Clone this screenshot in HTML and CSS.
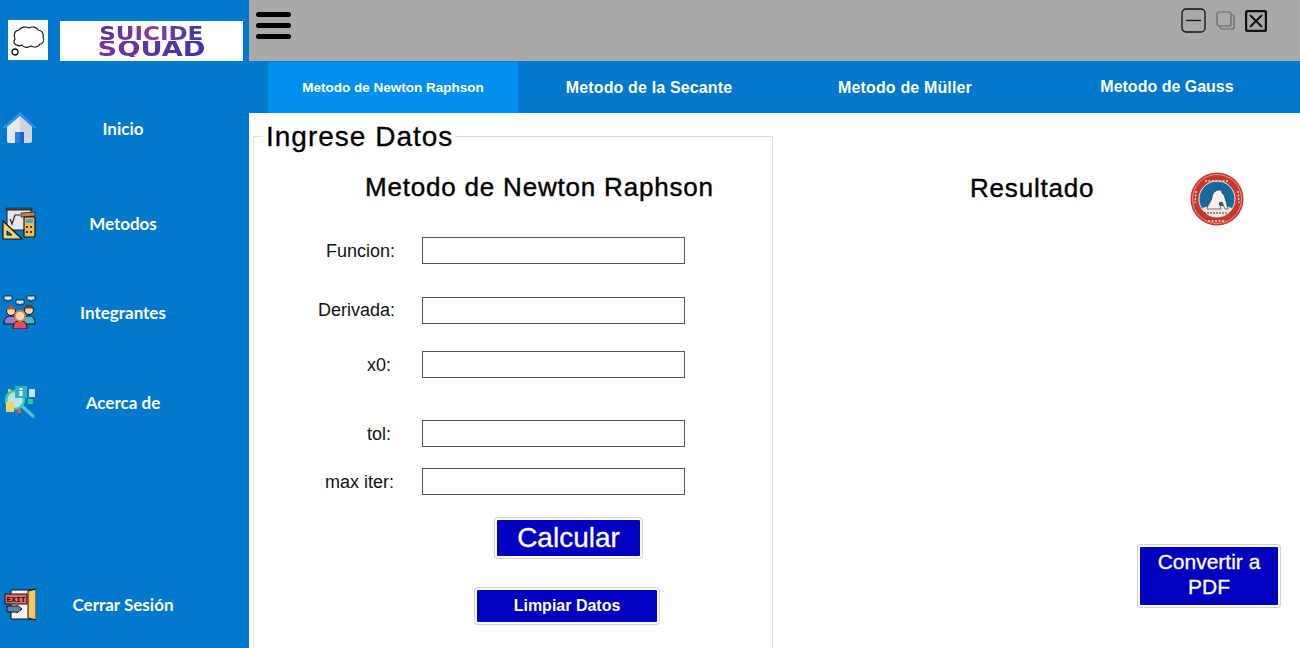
FILE: index.html
```html
<!DOCTYPE html>
<html lang="en">
<head>
    <meta charset="UTF-8">
    <title>Metodo de Newton Raphson</title>
    <link rel="stylesheet" href="styles.css">
</head>
<body>
    <div class="app">
        <!-- Sidebar -->
        <aside class="sidebar">
            <div class="brand">
                <div class="brand-icon">
                    <svg width="40" height="40" viewBox="0 0 40 40">
                        <path d="M9 25c-3 0-4-4-2-6-2-4 0-9 4-9 2-3 7-4 10-2 3-2 8-1 9 2 4 0 6 4 5 7 2 3 0 7-3 7-1 3-6 4-9 2-3 2-7 2-9-1-2 1-4 1-5 0z" fill="#fff" stroke="#111" stroke-width="1.100"/>
                        <circle cx="7" cy="32" r="3" fill="#fff" stroke="#111" stroke-width="1.300"/>
                    </svg>
                </div>
                <div class="brand-logo">
                    <span class="brand-top">SUICIDE</span>
                    <span class="brand-bottom">SQUAD</span>
                </div>
            </div>

            <a class="side-link link-home" href="#inicio">
                <svg class="side-icon" width="34" height="34" viewBox="0 0 34 34">
                    <path d="M24 3h5v10h-5z" fill="#1f6fd0"/>
                    <path d="M5 15 18 4v28H7a2 2 0 0 1-2-2z" fill="#e6e8eb"/>
                    <path d="M18 4 30 15v15a2 2 0 0 1-2 2H18z" fill="#d0d4da"/>
                    <path d="M13 21h5v11h-5z" fill="#2a7fe0"/>
                    <path d="M18 21h4v11h-4z" fill="#1c65c4"/>
                    <path d="M1 16 18 1l16 15-1.500 2L18 5 2.500 18z" fill="#2d8ff0"/>
                </svg>
                <span>Inicio</span>
            </a>

            <a class="side-link link-methods" href="#metodos">
                <svg class="side-icon" width="34" height="34" viewBox="0 0 34 34">
                    <path d="M4 2h26v2H4z" fill="#555" stroke="#111" stroke-width=".6"/>
                    <path d="M5 4h24v20H5z" fill="#e6e8ea" stroke="#222"/>
                    <path d="M8 13l2 5 3-9h5" fill="none" stroke="#222" stroke-width="1.200"/>
                    <path d="M19 7l14-1v4l-14 1z" fill="#c9785a" stroke="#222" stroke-width=".8"/>
                    <path d="M1 15v18h19z" fill="#f4d27a" stroke="#111" stroke-width="1.200"/>
                    <path d="M5 25v4h5z" fill="#0078cc" stroke="#111"/>
                    <rect x="22" y="11" width="11" height="20" rx="1" fill="#f2b84b" stroke="#111" stroke-width="1.200"/>
                    <rect x="24" y="13" width="7" height="4" fill="#4aa5d8"/>
                    <path d="M24 20h2v2h-2zM28 20h2v2h-2zM24 25h2v2h-2zM28 25h2v2h-2z" fill="#333"/>
                </svg>
                <span>Metodos</span>
            </a>

            <a class="side-link link-team" href="#integrantes">
                <svg class="side-icon" width="34" height="34" viewBox="0 0 34 34">
                    <path d="M2 1h8v4H7l-1 2-1-2H2zM14 5h8v4h-3l-1 2-1-2h-3zM25 1h8v4h-3l-1 2-1-2h-3z" fill="#cfe3ea" stroke="#111" stroke-width=".8"/>
                    <path d="M2 29c0-6 3-8 7-8s6 2 6 8z" fill="#9a79c9" stroke="#111"/>
                    <circle cx="9" cy="16" r="4.500" fill="#f6d3b8" stroke="#111"/>
                    <path d="M4.500 15c0-6 9-6 9 0-3-1-6-1-9 0z" fill="#a6543a"/>
                    <path d="M20 29c0-6 3-8 7-8s6 2 6 8z" fill="#4fb5c9" stroke="#111"/>
                    <circle cx="27" cy="15" r="4.500" fill="#f6d3b8" stroke="#111"/>
                    <path d="M22.500 14c0-6 9-6 9 0-3-1-6-1-9 0z" fill="#5a3a2a"/>
                    <path d="M11 34c0-6 2-8 7-8s7 2 7 8z" fill="#e5475c" stroke="#111"/>
                    <circle cx="18" cy="21" r="5" fill="#f9d9bf" stroke="#e28a28" stroke-width="1.800"/>
                </svg>
                <span>Integrantes</span>
            </a>

            <a class="side-link link-about" href="#acerca">
                <svg class="side-icon" width="34" height="34" viewBox="0 0 34 34">
                    <path d="M6 4h3v3H6z" fill="#f2b84b"/>
                    <circle cx="13" cy="15" r="9" fill="#bfe0ec" stroke="#2fd39b" stroke-width="2.500"/>
                    <path d="M21 22l10 9" stroke="#4fc3d8" stroke-width="3.500" stroke-linecap="round"/>
                    <path d="M13 1h12v12H13z" fill="#28b3c7"/>
                    <path d="M17.500 3h3v2h-3zM17.500 6h3v5h-3z" fill="#fff"/>
                    <path d="M27 4h6v8h-6z" fill="#cfe0f5"/>
                    <path d="M4 17h8v10H4z" fill="#f6cf6e"/>
                    <path d="M26 14h5v5h-5z" fill="#1fd08f"/>
                    <path d="M15 24h4v4h-4z" fill="#ee4e62"/>
                </svg>
                <span>Acerca de</span>
            </a>

            <a class="side-link link-exit" href="#salir">
                <svg class="side-icon" width="34" height="34" viewBox="0 0 34 34">
                    <path d="M9 3h24v29H9z" fill="#f4f4f4" stroke="#111"/>
                    <path d="M26 4l8-2v31l-8-2z" fill="#f7c766" stroke="#111"/>
                    <rect x="3" y="7" width="22" height="10" fill="#e8656a" stroke="#111"/>
                    <text x="14" y="15" class="exit-text">EXIT</text>
                    <path d="M5 19h10v-1l5 4-5 4v-1H5z" fill="#5b87a8" stroke="#111"/>
                </svg>
                <span>Cerrar Sesión</span>
            </a>
        </aside>

        <main class="main">
            <!-- Top bar -->
            <header class="topbar">
                <button class="burger"><i></i><i></i><i></i></button>
                <div class="win-buttons">
                    <svg width="26" height="26" viewBox="0 0 26 26">
                        <rect x="1" y="1" width="23" height="23" rx="4" fill="none" stroke="#111" stroke-width="1.300"/>
                        <path d="M5 12.500h15" stroke="#111" stroke-width="1.300"/>
                    </svg>
                    <svg width="20" height="20" viewBox="0 0 20 20">
                        <rect x="4" y="4" width="14" height="14" rx="2" fill="none" stroke="#666" stroke-width="1.200"/>
                        <rect x="1" y="1" width="14" height="14" rx="2" fill="#a9a9a9" stroke="#666" stroke-width="1.200"/>
                    </svg>
                    <svg width="22" height="22" viewBox="0 0 22 22">
                        <rect x="1" y="1" width="20" height="20" rx="2" fill="none" stroke="#111" stroke-width="2.400"/>
                        <path d="M5 5l12 12M17 5 5 17" stroke="#111" stroke-width="2"/>
                    </svg>
                </div>
            </header>

            <!-- Tabs -->
            <nav class="tabs">
                <a class="tab active" href="#newton">Metodo de Newton Raphson</a>
                <a class="tab" href="#secante">Metodo de la Secante</a>
                <a class="tab" href="#muller">Metodo de Müller</a>
                <a class="tab tab-last" href="#gauss">Metodo de Gauss</a>
            </nav>

            <div class="content">
                <fieldset class="datos">
                    <legend>Ingrese Datos</legend>
                    <h2>Metodo de Newton Raphson</h2>

                    <div class="field field-fn"><label>Funcion:</label><input type="text"></div>
                    <div class="field field-der"><label>Derivada:</label><input type="text"></div>
                    <div class="field field-x0"><label class="short">x0:</label><input type="text"></div>
                    <div class="field field-tol"><label class="short">tol:</label><input type="text"></div>
                    <div class="field field-max"><label class="mid">max iter:</label><input type="text"></div>

                    <div class="actions">
                        <button class="btn btn-calc">Calcular</button>
                        <button class="btn btn-clear">Limpiar Datos</button>
                    </div>
                </fieldset>

                <section class="resultado">
                    <div class="res-head">
                        <h2>Resultado</h2>
                        <svg class="seal" width="54" height="54" viewBox="0 0 54 54">
                            <circle cx="27" cy="27" r="26.500" fill="#c8372d"/>
                            <circle cx="27" cy="27" r="24.500" fill="none" stroke="#eed9c8" stroke-width=".6"/>
                            <circle cx="27" cy="27" r="18" fill="#17699f" stroke="#f3ece2"/>
                            <path d="M12 36c9-3 21-3 30 0-3 6-9 9-15 9s-12-3-15-9z" fill="#f1e8dc"/>
                            <path d="M17 37c1-5 4-7 5-11 0-4 3-8 7-8 2 0 3 1 3 3l2 2 2 6 2 8h-3l-3-7-3 1 2 6z" fill="#f5f1ea" stroke="#222" stroke-width=".6"/>
                            <path d="M14 41h24" stroke="#333" stroke-width="1" stroke-dasharray="2 1"/>
                            <path d="M15 9h24M6 19l-1 12M48 19l1 12M18 49h18" stroke="#f0d9c4" stroke-width="1.500" stroke-dasharray="2 1.500"/>
                        </svg>
                    </div>
                    <button class="btn btn-pdf">Convertir a PDF</button>
                </section>
            </div>
        </main>
    </div>
</body>
</html>
```

FILE: styles.css
```css
* {
    margin: 0;
    padding: 0;
    box-sizing: border-box;
}

html, body {
    height: 100%;
    overflow: hidden;
}

body {
    font-family: 'Liberation Sans', Arial, sans-serif;
    color: #000;
    background: #fff;
}

.app {
    display: flex;
    height: 648px;
    overflow: hidden;
}

/* sidebar */
.sidebar {
    width: 249px;
    flex: none;
    background: #0078cc;
    display: flex;
    flex-direction: column;
}

.brand {
    display: flex;
    align-items: flex-start;
    padding: 20px 6px 0 8px;
    height: 108px;
}

.brand-icon {
    width: 40px;
    height: 40px;
    background: #fff;
    flex: none;
}

.brand-logo {
    width: 183px;
    height: 40px;
    margin: 1px 0 0 12px;
    background: #fff;
    display: flex;
    flex-direction: column;
    align-items: center;
    justify-content: center;
    font-family: 'DejaVu Sans', sans-serif;
    font-weight: bold;
    line-height: 16px;
}

.brand-top {
    font-size: 20px;
    transform: scaleX(1.15);
    background: linear-gradient(90deg, #57308f, #8a3a9c, #3c3aa0);
    -webkit-background-clip: text;
    background-clip: text;
    color: transparent;
}

.brand-bottom {
    font-size: 21px;
    transform: scaleX(1.3);
    background: linear-gradient(90deg, #7a3399, #3a37a5);
    -webkit-background-clip: text;
    background-clip: text;
    color: transparent;
}

.side-link {
    display: flex;
    align-items: center;
    height: 40px;
    padding-left: 2px;
    color: #fff;
    text-decoration: none;
    font-family: 'Lato', sans-serif;
    font-weight: bold;
    font-size: 17px;
}

.side-link span {
    width: 174px;
    text-align: center;
}

.side-icon {
    flex: none;
}

.link-methods { margin-top: 55px; }
.link-team { margin-top: 49px; }
.link-about { margin-top: 50px; }
.link-exit { margin-top: 162px; }

.exit-text {
    font-family: 'Liberation Mono', monospace;
    font-size: 8px;
    font-weight: bold;
    text-anchor: middle;
    fill: #111;
}

/* right side */
.main {
    flex: 1;
    min-width: 0;
    display: flex;
    flex-direction: column;
}

.topbar {
    height: 62px;
    flex: none;
    background: #a9a9a9;
    border-bottom: 1px solid #0078cc;
    display: flex;
    justify-content: space-between;
    align-items: flex-start;
}

.burger {
    border: 0;
    background: none;
    width: 35px;
    margin: 12px 0 0 7px;
    display: flex;
    flex-direction: column;
    gap: 6px;
}

.burger i {
    display: block;
    height: 5px;
    border-radius: 3px;
    background: #000;
}

.win-buttons {
    display: flex;
    align-items: center;
    gap: 9px;
    margin: 8px 33px 0 0;
}

.tabs {
    height: 51px;
    flex: none;
    background: #0078cc;
    display: flex;
    padding-left: 19px;
    gap: 6px;
}

.tab {
    width: 250px;
    display: flex;
    align-items: center;
    justify-content: center;
    color: #fff;
    text-decoration: none;
    font-weight: bold;
    font-size: 16px;
    letter-spacing: 0.15px;
}

.tab.active {
    background: #008fef;
    font-size: 13.500px;
    letter-spacing: 0;
}

.tab-last {
    margin-left: 6px;
    padding-bottom: 2px;
    letter-spacing: 0;
}

.content {
    flex: 1;
    display: flex;
    min-height: 0;
}

/* form */
.datos {
    width: 520px;
    height: 560px;
    flex: none;
    margin: 5px 0 0 4px;
    border: 1px solid #ddd;
}

.datos legend {
    margin-left: 9px;
    padding: 2px 3px 0;
    font-size: 28px;
    line-height: 34px;
    letter-spacing: 1px;
    -webkit-text-stroke: 0.3px #000;
}

.datos h2 {
    margin: 18px 0 0 111px;
    font-size: 26px;
    line-height: 30px;
    letter-spacing: 0.8px;
    font-weight: normal;
    -webkit-text-stroke: 0.4px #000;
    white-space: nowrap;
}

.field {
    display: flex;
    align-items: center;
    height: 27px;
    font-size: 18px;
    color: #111;
}

.field label {
    width: 141px;
    margin-top: 2px;
    margin-right: 27px;
    text-align: right;
}

.field-der label {
    margin-top: 0;
}

.field label.short {
    width: 137px;
    margin-right: 31px;
}

.field label.mid {
    width: 140px;
    margin-right: 28px;
}

.field input {
    width: 263px;
    height: 27px;
    border: 1px solid #555;
    background: #fff;
}

.field-fn { margin-top: 35px; }
.field-der { margin-top: 33px; }
.field-x0 { margin-top: 27px; }
.field-tol { margin-top: 42px; }
.field-max { margin-top: 21px; }

.actions {
    display: flex;
    flex-direction: column;
    align-items: flex-start;
}

.btn {
    background: #0000c0;
    color: #fff;
    border: 2px solid #fff;
    border-radius: 3px;
    box-shadow: 0 0 0 1px #d0d0d0;
    font-family: 'Liberation Sans', Arial, sans-serif;
}

.btn-calc {
    width: 147px;
    height: 40px;
    margin: 23px 0 0 241px;
    font-size: 28px;
    -webkit-text-stroke: 0.3px #fff;
}

.btn-clear {
    width: 184px;
    height: 36px;
    margin: 30px 0 0 221px;
    font-size: 16px;
    font-weight: bold;
}

/* results */
.resultado {
    flex: 1;
    min-width: 0;
    display: flex;
    flex-direction: column;
}

.res-head {
    display: flex;
    align-items: flex-start;
    padding: 59px 0 0 197px;
}

.res-head h2 {
    width: 220px;
    margin-top: 1px;
    font-size: 26px;
    line-height: 30px;
    letter-spacing: 0.8px;
    font-weight: normal;
    -webkit-text-stroke: 0.4px #000;
}

.seal {
    flex: none;
}

.btn-pdf {
    width: 142px;
    height: 62px;
    margin: 319px 0 0 365px;
    padding-bottom: 4px;
    font-size: 21px;
    line-height: 25px;
    -webkit-text-stroke: 0.3px #fff;
}
```
